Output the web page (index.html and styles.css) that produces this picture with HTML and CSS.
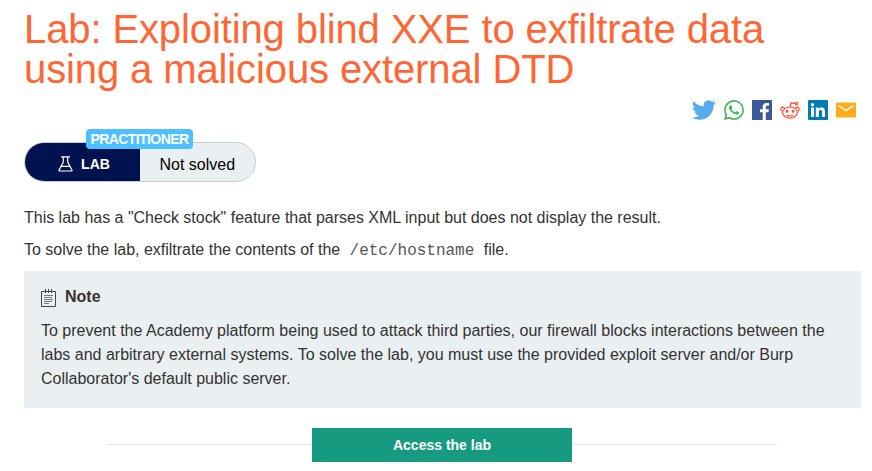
FILE: index.html
```html
<!DOCTYPE html>
<html lang="en">
<head>
<meta charset="utf-8">
<title>Lab: Exploiting blind XXE to exfiltrate data using a malicious external DTD</title>
<link rel="stylesheet" href="styles.css">
</head>
<body>
<main class="page">
  <h1 class="title">Lab: Exploiting blind XXE to exfiltrate data<br>using a malicious external DTD</h1>
  <div class="share">
    <svg class="icon twitter" viewBox="0 0 24 24"><path fill="#55acee" d="M23.95 4.57a10 10 0 0 1-2.82.77 4.96 4.96 0 0 0 2.16-2.72 9.9 9.9 0 0 1-3.12 1.18 4.92 4.92 0 0 0-8.38 4.48A13.93 13.93 0 0 1 1.64 3.16a4.92 4.92 0 0 0 1.52 6.57 4.9 4.9 0 0 1-2.23-.61v.06a4.92 4.92 0 0 0 3.95 4.83 5 5 0 0 1-2.21.08 4.94 4.94 0 0 0 4.6 3.42A9.87 9.87 0 0 1 0 19.54a13.99 13.99 0 0 0 7.55 2.21c9.05 0 14-7.5 14-13.98 0-.21 0-.42-.02-.63a9.94 9.94 0 0 0 2.46-2.55z"/></svg>
    <svg class="icon" viewBox="0 0 24 24"><path fill="#43b854" d="M17.47 14.38c-.3-.15-1.76-.87-2.03-.97-.27-.1-.47-.15-.67.15-.2.3-.77.97-.94 1.16-.17.2-.35.22-.64.08-.3-.15-1.26-.46-2.39-1.48-.88-.79-1.48-1.76-1.65-2.06-.17-.3-.02-.46.13-.6.13-.14.3-.35.45-.52.15-.18.2-.3.3-.5.1-.2.05-.37-.03-.52-.07-.15-.67-1.61-.91-2.21-.24-.58-.49-.5-.67-.51l-.57-.01c-.2 0-.52.07-.79.37-.27.3-1.04 1.02-1.04 2.48s1.06 2.88 1.21 3.07c.15.2 2.1 3.2 5.08 4.49.71.3 1.26.49 1.69.62.71.23 1.36.2 1.87.12.57-.09 1.76-.72 2.01-1.41.25-.69.25-1.29.17-1.41-.07-.12-.27-.2-.57-.35m-5.42 7.4h-.01a9.87 9.87 0 0 1-5.03-1.38l-.36-.21-3.74.98 1-3.65-.24-.37a9.86 9.86 0 0 1-1.51-5.26C2.17 6.44 6.6 2.01 12.06 2.01a9.83 9.83 0 0 1 9.88 9.89c0 5.45-4.44 9.88-9.89 9.88m8.41-18.3A11.82 11.82 0 0 0 12.05 0C5.5 0 .16 5.34.16 11.89c0 2.1.55 4.14 1.59 5.95L.06 24l6.3-1.65a11.88 11.88 0 0 0 5.68 1.45h.01c6.55 0 11.89-5.34 11.89-11.89a11.82 11.82 0 0 0-3.48-8.41z"/></svg>
    <svg class="icon" viewBox="0 0 20 20"><path fill="#3b5998" d="M0 0h20v20h-6.2v-7.8h2.7l.4-3h-3.1V7.3c0-.9.3-1.5 1.5-1.5H17V3.1c-.3 0-1.2-.1-2.3-.1-2.4 0-4 1.4-4 4.1v2.1H8v3h2.7V20H0z"/></svg>
    <svg class="icon" viewBox="0 0 20 20" fill="none" stroke="#ff4a2b" stroke-width="1.2"><ellipse cx="10" cy="12.6" rx="7.4" ry="5.6"/><path d="M10 7 11 2.8l4.3.9M2.7 11.5C.2 10.5.4 7.4 2.5 7.2c1 0 1.8.5 2.2 1.2M17.3 11.5c2.5-1 2.3-4.1.2-4.3-1 0-1.8.5-2.2 1.2M6.6 14.9q3.4 2.2 6.8 0"/><circle cx="16.7" cy="3.7" r="1.3"/><circle cx="7" cy="11.3" r=".9" fill="#ff4a2b"/><circle cx="13" cy="11.3" r=".9" fill="#ff4a2b"/></svg>
    <svg class="icon" viewBox="0 0 20 20"><rect width="20" height="20" rx="1" fill="#007bb5"/><path fill="#fff" d="M3 7.6h3V17H3zM4.5 3a1.7 1.7 0 1 1 0 3.4 1.7 1.7 0 0 1 0-3.4M7.8 7.6h2.8v1.3c.4-.8 1.4-1.5 2.8-1.5 3 0 3.6 2 3.6 4.5V17h-3v-4.6c0-1.1 0-2.4-1.5-2.4s-1.7 1.1-1.7 2.3V17h-3z"/></svg>
    <svg class="icon" viewBox="0 0 20 20"><rect y="2.5" width="20" height="15" rx="1" fill="#ffac1c"/><path fill="none" stroke="#fff" stroke-width="1.5" d="m2.5 5.5 7.5 5 7.5-5"/></svg>
  </div>
  <div class="status">
    <span class="level">PRACTITIONER</span>
    <div class="kind">
      <svg class="flask" viewBox="0 0 15 16" fill="none" stroke="#fff" stroke-width="1.2"><path d="M3 .8h9M5.3.8V6L1 14.2q-.2.8.7.8h11.6q.9 0 .7-.8L9.7 6V.8M3.8 10.3h7.4"/></svg>
      <span class="lab">LAB</span>
    </div>
    <div class="state"><span>Not solved</span></div>
  </div>
  <p class="text intro">This lab has a "Check stock" feature that parses XML input but does not display the result.</p>
  <p class="text task">To solve the lab, exfiltrate the contents of the <code>/etc/hostname</code> file.</p>
  <section class="note">
    <div class="note-head">
      <svg class="pad" viewBox="0 0 16 18" fill="none" stroke="#444"><path d="M.5 2.5h14v15H.5zM4.5 0v4M7.5 0v4M10.5 0v4"/><path stroke="#777" d="M3 6.5h9M3 8.5h8M3 10.5h9M3 12.5h8M3 14.5h5"/></svg>
      <strong>Note</strong>
    </div>
    <p class="text note-text">To prevent the Academy platform being used to attack third parties, our firewall blocks interactions between the<br>labs and arbitrary external systems. To solve the lab, you must use the provided exploit server and/or Burp<br>Collaborator's default public server.</p>
  </section>
  <div class="launch"><a class="button">Access the lab</a></div>
</main>
</body>
</html>
```
FILE: styles.css
```css
* { box-sizing: border-box; }
body { margin: 0; background: #fff; color: #333332; font-family: "Liberation Sans", Arial, sans-serif; overflow: hidden; }
.page { width: 872px; height: 471px; padding: 9px 11px 0 24px; }
.title { margin: 0; font-size: 40px; line-height: 40px; font-weight: 400; color: #ff6633; white-space: nowrap; letter-spacing: -0.11px; }
.share { display: flex; justify-content: flex-end; align-items: center; gap: 8px; height: 20px; margin-top: 11px; padding-right: 5px; }
.icon { width: 20px; height: 20px; }
.twitter { width: 24px; height: 24px; }
.status { position: relative; display: flex; width: 232px; height: 40px; margin-top: 22px; border: 1px solid #c8cfd0; border-radius: 20px; background: #eaeff2; }
.kind { display: flex; align-items: center; width: 115px; height: 38px; padding: 3px 0 0 33px; border-radius: 19px 0 0 19px; background: #00124f; color: #fff; }
.flask { width: 15px; height: 16px; }
.lab { margin-left: 8px; font-size: 14px; font-weight: 700; letter-spacing: 0.1px; }
.state { display: flex; align-items: center; padding: 5px 0 0 19.5px; font-size: 16px; color: #000; }
.level { position: absolute; left: 61px; top: -14px; width: 107px; height: 20px; border-radius: 4px; background: #4dc1ff; color: #fff; font-size: 14px; font-weight: 700; line-height: 20px; letter-spacing: -0.6px; text-align: center; white-space: nowrap; }
.text { margin: 0; font-size: 16px; line-height: 24px; white-space: nowrap; }
.intro { margin-top: 24px; letter-spacing: -0.01px; }
.task { margin-top: 8px; letter-spacing: -0.01px; }
code { margin: 0 5px; font-family: "Liberation Mono", "Courier New", monospace; font-size: 16px; color: #555; }
.note { width: 837px; height: 137px; margin-top: 8px; padding: 14px 17px; background: #eaeff2; }
.note-head { display: flex; align-items: center; gap: 8px; height: 24px; font-size: 16px; }
.pad { width: 16px; height: 18px; margin-top: 2px; }
.note-text { margin-top: 10px; }
.launch { display: flex; align-items: center; width: 670px; margin: 20px 0 0 83px; }
.launch::before, .launch::after { content: ""; flex: 1; height: 1px; margin-bottom: 2px; background: #e5e5e5; }
.button { width: 260px; height: 34px; background: #179b80; color: #fff; font-size: 14px; font-weight: 700; line-height: 34px; text-align: center; }
```
